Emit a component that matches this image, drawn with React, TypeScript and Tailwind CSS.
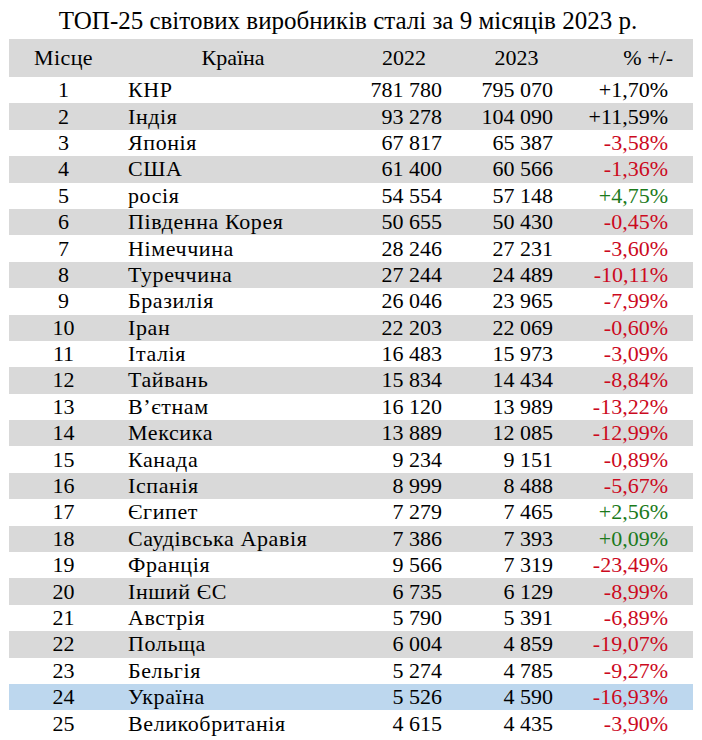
const ROWS: Array<[number, string, string, string, string]> = [
  [1, 'КНР', '781 780', '795 070', '+1,70%'],
  [2, 'Індія', '93 278', '104 090', '+11,59%'],
  [3, 'Японія', '67 817', '65 387', '-3,58%'],
  [4, 'США', '61 400', '60 566', '-1,36%'],
  [5, 'росія', '54 554', '57 148', '+4,75%'],
  [6, 'Південна Корея', '50 655', '50 430', '-0,45%'],
  [7, 'Німеччина', '28 246', '27 231', '-3,60%'],
  [8, 'Туреччина', '27 244', '24 489', '-10,11%'],
  [9, 'Бразилія', '26 046', '23 965', '-7,99%'],
  [10, 'Іран', '22 203', '22 069', '-0,60%'],
  [11, 'Італія', '16 483', '15 973', '-3,09%'],
  [12, 'Тайвань', '15 834', '14 434', '-8,84%'],
  [13, 'В’єтнам', '16 120', '13 989', '-13,22%'],
  [14, 'Мексика', '13 889', '12 085', '-12,99%'],
  [15, 'Канада', '9 234', '9 151', '-0,89%'],
  [16, 'Іспанія', '8 999', '8 488', '-5,67%'],
  [17, 'Єгипет', '7 279', '7 465', '+2,56%'],
  [18, 'Саудівська Аравія', '7 386', '7 393', '+0,09%'],
  [19, 'Франція', '9 566', '7 319', '-23,49%'],
  [20, 'Інший ЄС', '6 735', '6 129', '-8,99%'],
  [21, 'Австрія', '5 790', '5 391', '-6,89%'],
  [22, 'Польща', '6 004', '4 859', '-19,07%'],
  [23, 'Бельгія', '5 274', '4 785', '-9,27%'],
  [24, 'Україна', '5 526', '4 590', '-16,93%'],
  [25, 'Великобританія', '4 615', '4 435', '-3,90%'],
]

// Leaders (rows 1-2) stay black, the rest coloured by sign
function pctColor(place: number, pct: string) {
  if (place <= 2) return 'text-black'
  return pct.startsWith('+') ? 'text-[#1b7a1b]' : 'text-[#cc0a1e]'
}

function rowBg(place: number) {
  if (place === 24) return 'bg-[#bdd7ee]'
  return place % 2 === 0 ? 'bg-[#d9d9d9]' : 'bg-white'
}

export default function App() {
  return (
    <div className="w-[702px] h-[740px] bg-white text-black font-['Liberation_Serif','Times_New_Roman',serif] overflow-hidden">
      <h1 className="h-[39px] flex items-center justify-center text-[25px] leading-none pt-px pr-[6px]">
        ТОП-25 світових виробників сталі за 9 місяців 2023 р.
      </h1>

      <div className="mx-[9px] w-[684px]">
        <div className="h-[38px] bg-[#d9d9d9] grid grid-cols-[109px_230px_112px_113px_120px] items-center text-[22px] leading-none">
          <span className="text-center tracking-[0.4px]">Місце</span>
          <span className="text-center">Країна</span>
          <span className="text-center">2022</span>
          <span className="text-center">2023</span>
          <span className="text-right pr-[20px]">% +/-</span>
        </div>

        {ROWS.map(([place, country, y22, y23, pct]) => (
          <div
            key={place}
            className={`h-[26.4px] grid grid-cols-[109px_230px_112px_113px_120px] items-center text-[22px] leading-none ${rowBg(place)}`}
          >
            <span className="text-center">{place}</span>
            <span className="pl-[10px] whitespace-nowrap tracking-[0.6px]">{country}</span>
            <span className="text-right pr-[18px]">{y22}</span>
            <span className="text-right pr-[20px]">{y23}</span>
            <span className={`text-right pr-[25px] ${pctColor(place, pct)}`}>{pct}</span>
          </div>
        ))}
      </div>
    </div>
  )
}
